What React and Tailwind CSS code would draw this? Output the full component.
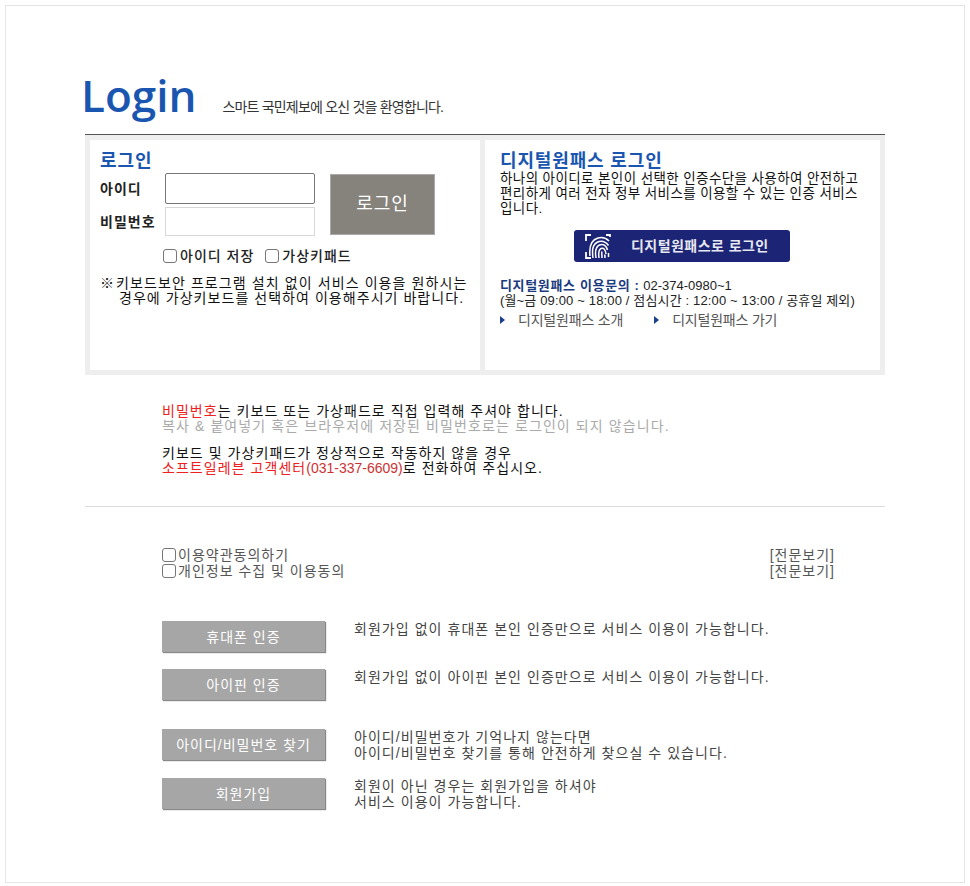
const KR = { fontFamily: '"Liberation Sans","Noto Sans CJK KR",sans-serif' };

function Check({ className = "" }) {
  return <span className={"inline-block w-[14px] h-[14px] shrink-0 rounded-[3px] border border-[#767676] bg-white " + className} />;
}

function Fingerprint() {
  return (
    <svg width="28" height="28" viewBox="0 0 28 28" fill="none" stroke="#fff" strokeWidth="1.5">
      <path d="M2 9V3h5M26 5V3h-4M2 20v6h5" strokeWidth="1.8" />
      <path d="M6 24C5 15 7 8 14 6c4-1 8 0 11 3" />
      <path d="M9 26c-1-8-1-14 6-16.500 4-1 7 .5 9.500 4" />
      <path d="M12 26c-1-6-1-11 3.500-13 4-1.500 7 1 8 5" />
      <path d="M15 26c-.5-4-1-8 2-9.500 3-1 4.500 1.500 5 5.500" />
      <path d="M18 26c0-3-.5-5 0-6.500M21 26c0-1 0-2-.3-3.500M24.500 21v4" />
    </svg>
  );
}

function Arrow() {
  return <span className="inline-block w-0 h-0 border-y-[4px] border-y-transparent border-l-[5px] border-l-[#1a3f8f]" />;
}

function ActionRow({ label, lines, className = "" }) {
  return (
    <div className={"flex items-start " + className}>
      <div className="w-[163px] h-[31px] pt-[2px] bg-[#a6a6a6] shadow-[1px_1px_1px_#888] flex items-center justify-center text-white text-[14px] tracking-[1px]">{label}</div>
      <div className="ml-[29px] text-[14px] leading-[16px] tracking-[1.05px] text-[#444]">
        {lines.map((l) => <div key={l}>{l}</div>)}
      </div>
    </div>
  );
}

export default function App() {
  return (
    <div style={KR} className="w-[970px] h-[886px] bg-white pt-[5px] px-[5px]">
      <div className="w-[960px] h-[878px] border border-[#e4e4e4] bg-white">
        <div className="ml-[75px] w-[804px] mt-[58px] h-[70px] flex items-start">
          <h1 className="text-[44px] leading-[62px] font-semibold text-[#1a56b0]" style={{ fontFamily: '"Open Sans",sans-serif' }}>Login</h1>
          <p className="ml-[26px] mt-[33px] text-[14px] leading-[20px] tracking-[-0.8px] text-[#333]">스마트 국민제보에 오신 것을 환영합니다.</p>
        </div>
        <div className="ml-[79px] w-[800px] h-[241px] border-t border-[#555] bg-[#eeeeee] p-[5px] flex gap-[5px]">
          <section className="w-[390px] h-[230px] bg-white pl-[10px] pt-[11px]">
            <h2 className="text-[18px] leading-[20px] tracking-[1px] font-bold text-[#1a56b0]">로그인</h2>
            <div className="flex mt-[2px]">
              <div className="w-[65px] text-[14px] tracking-[1px] font-semibold text-[#222]">
                <div className="h-[34px] leading-[32px]">아이디</div>
                <div className="h-[30px] leading-[30px]">비밀번호</div>
              </div>
              <div className="flex flex-col gap-[3px] w-[150px]">
                <div className="h-[31px] rounded-[2px] border border-[#767676] bg-white" />
                <div className="h-[29px] border border-[#d8d8d8] bg-white" />
              </div>
              <div className="ml-[15px] mt-[1px] w-[105px] h-[61px] bg-[#85837c] border border-[#aaa] flex items-center justify-center text-white text-[18px] tracking-[1px]">로그인</div>
            </div>
            <div className="ml-[63px] mt-[9px] flex items-center text-[14px] tracking-[1px] font-medium text-[#222] leading-[20px]">
              <Check />
              <span className="ml-[3px]">아이디 저장</span>
              <Check className="ml-[11px]" />
              <span className="ml-[3px]">가상키패드</span>
            </div>
            <div className="mt-[10px] text-[14px] leading-[15px] tracking-[1.1px] text-[#111]">
              <div><span className="inline-block w-[16px]">※</span>키보드보안 프로그램 설치 없이 서비스 이용을 원하시는</div>
              <div className="pl-[19px] tracking-[1.05px]">경우에 가상키보드를 선택하여 이용해주시기 바랍니다.</div>
            </div>
          </section>
          <section className="w-[395px] h-[230px] bg-white pl-[15px] pt-[11px]">
            <h2 className="text-[18px] leading-[20px] tracking-[0.85px] font-bold text-[#1a56b0]">디지털원패스 로그인</h2>
            <p className="text-[13.500px] leading-[15px] tracking-[0.4px] text-[#111] w-[362px]">하나의 아이디로 본인이 선택한 인증수단을 사용하여 안전하고 편리하게 여러 전자 정부 서비스를 이용할 수 있는 인증 서비스입니다.</p>
            <div className="ml-[74px] mt-[14px] w-[216px] h-[32px] rounded-[3px] bg-[#1b2475] flex items-center pl-[10px]">
              <Fingerprint />
              <span className="ml-[19px] text-[14px] tracking-[0.45px] font-bold text-[#e8e8f0]">디지털원패스로 로그인</span>
            </div>
            <div className="mt-[16px] text-[13px] leading-[15px] text-[#222]">
              <div><b className="tracking-[0.65px] text-[#1b3a80]">디지털원패스 이용문의 :</b> 02-374-0980~1</div>
              <div className="tracking-[0.15px]">(월~금 09:00 ~ 18:00 / 점심시간 : 12:00 ~ 13:00 / 공휴일 제외)</div>
            </div>
            <div className="mt-[3px] flex items-center text-[14px] leading-[18px] tracking-[-0.2px] text-[#555]">
              <Arrow />
              <span className="ml-[13px]">디지털원패스 소개</span>
              <span className="ml-[31px] flex items-center"><Arrow /></span>
              <span className="ml-[13px]">디지털원패스 가기</span>
            </div>
          </section>
        </div>
        <div className="ml-[156px] mt-[29px] text-[14px] leading-[15px] tracking-[1.05px] text-[#111]">
          <div><span className="text-[#f02020]">비밀번호</span>는 키보드 또는 가상패드로 직접 입력해 주셔야 합니다.</div>
          <div className="text-[#aaaaaa] tracking-[1.1px]">복사 &amp; 붙여넣기 혹은 브라우저에 저장된 비밀번호로는 로그인이 되지 않습니다.</div>
          <div className="mt-[12px]">키보드 및 가상키패드가 정상적으로 작동하지 않을 경우</div>
          <div><span className="text-[#f02020]">소프트일레븐 고객센터<span className="tracking-normal text-[#cc3333]">(031-337-6609)</span></span>로 전화하여 주십시오.</div>
        </div>
        <hr className="ml-[79px] w-[800px] mt-[30px] border-t border-[#dddddd]" />
        <div className="ml-[156px] w-[673px] mt-[40px] text-[14px] leading-[16px] tracking-[1px] text-[#555]">
          <div className="flex items-center justify-between">
            <div className="flex items-center"><Check className="mr-[2px]" />이용약관동의하기</div>
            <span>[전문보기]</span>
          </div>
          <div className="flex items-center justify-between">
            <div className="flex items-center"><Check className="mr-[2px]" />개인정보 수집 및 이용동의</div>
            <span>[전문보기]</span>
          </div>
        </div>
        <div className="ml-[156px] mt-[42px]">
          <ActionRow label="휴대폰 인증" lines={["회원가입 없이 휴대폰 본인 인증만으로 서비스 이용이 가능합니다."]} />
          <ActionRow className="mt-[17px]" label="아이핀 인증" lines={["회원가입 없이 아이핀 본인 인증만으로 서비스 이용이 가능합니다."]} />
          <ActionRow className="mt-[29px]" label="아이디/비밀번호 찾기" lines={["아이디/비밀번호가 기억나지 않는다면", "아이디/비밀번호 찾기를 통해 안전하게 찾으실 수 있습니다."]} />
          <ActionRow className="mt-[17px]" label="회원가입" lines={["회원이 아닌 경우는 회원가입을 하셔야", "서비스 이용이 가능합니다."]} />
        </div>
      </div>
    </div>
  );
}
